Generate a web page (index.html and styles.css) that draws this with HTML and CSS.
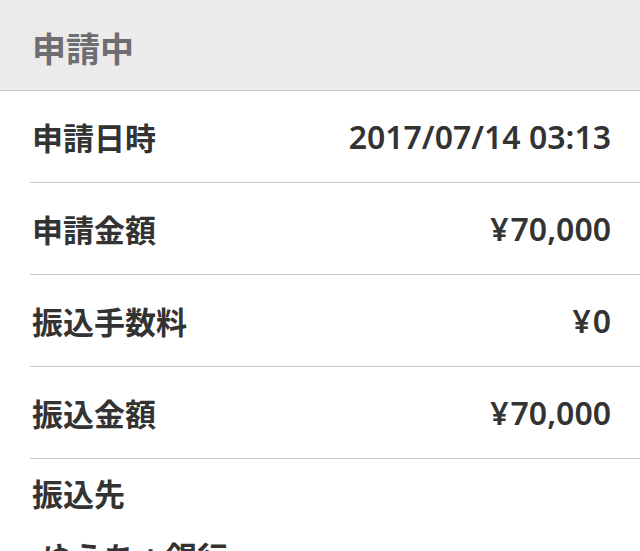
FILE: index.html
```html
<!DOCTYPE html>
<html lang="ja">
<head>
<meta charset="utf-8">
<link rel="stylesheet" href="styles.css">
</head>
<body>
<div class="header">申請中</div>
<div class="list">
  <div class="row"><span class="label">申請日時</span><span class="value">2017/07/14 03:13</span></div>
  <div class="row"><span class="label">申請金額</span><span class="value"><span class="yen">¥</span>70,000</span></div>
  <div class="row"><span class="label">振込手数料</span><span class="value"><span class="yen">¥</span>0</span></div>
  <div class="row"><span class="label">振込金額</span><span class="value"><span class="yen">¥</span>70,000</span></div>
  <div class="block">
    <div class="label">振込先</div>
    <div class="bank">ゆうちょ銀行</div>
  </div>
</div>
</body>
</html>
```
FILE: styles.css
```css
html, body {
  margin: 0;
  padding: 0;
  background: #ffffff;
  font-family: "Noto Sans", "Noto Sans CJK JP", sans-serif;
  overflow: hidden;
}
.header {
  box-sizing: border-box;
  height: 91px;
  background: #ebebeb;
  border-bottom: 1px solid #c8c8c8;
  display: flex;
  align-items: center;
  padding-left: 32px;
  padding-top: 4px;
  font-size: 34px;
  font-weight: 600;
  color: #6d6d72;
}
.list {
  margin-left: 30px;
}
.row {
  height: 92px;
  box-sizing: border-box;
  border-bottom: 1px solid #c8c8c8;
  display: flex;
  align-items: center;
  justify-content: space-between;
  padding: 0 29px 0 2px;
  font-size: 31px;
  font-weight: 600;
  color: #333333;
}
.value {
  font-size: 32px;
}
.yen {
  margin-right: 2px;
}
.block {
  padding: 14px 29px 0 2px;
  font-size: 31px;
  font-weight: 600;
  color: #333333;
}
.block .label {
  line-height: 42px;
}
.bank {
  margin-top: 21px;
  padding-left: 10px;
  line-height: 42px;
}
```
